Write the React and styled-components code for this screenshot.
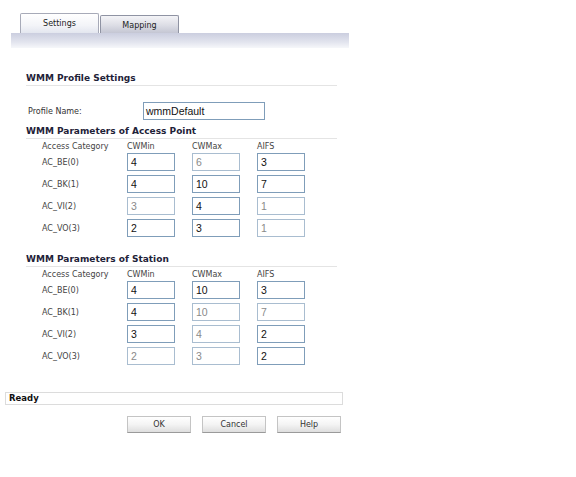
import React from 'react';
import styled, { createGlobalStyle } from 'styled-components';

const GlobalStyle = createGlobalStyle`
  body {
    margin: 0;
    background: #ffffff;
    font-family: 'DejaVu Sans', Verdana, sans-serif;
    color: #222;
  }
`;

const AP_ROWS = [
  { name: 'AC_BE(0)', values: [['4', 1], ['6', 0], ['3', 1]] },
  { name: 'AC_BK(1)', values: [['4', 1], ['10', 1], ['7', 1]] },
  { name: 'AC_VI(2)', values: [['3', 0], ['4', 1], ['1', 0]] },
  { name: 'AC_VO(3)', values: [['2', 1], ['3', 1], ['1', 0]] },
];

const STATION_ROWS = [
  { name: 'AC_BE(0)', values: [['4', 1], ['10', 1], ['3', 1]] },
  { name: 'AC_BK(1)', values: [['4', 1], ['10', 0], ['7', 0]] },
  { name: 'AC_VI(2)', values: [['3', 1], ['4', 0], ['2', 1]] },
  { name: 'AC_VO(3)', values: [['2', 0], ['3', 0], ['2', 1]] },
];

const ParamTable = ({ rows }) => (
  <Table>
    <HeadCell>Access Category</HeadCell>
    <HeadCell>CWMin</HeadCell>
    <HeadCell>CWMax</HeadCell>
    <HeadCell>AIFS</HeadCell>
    {rows.map((row) => (
      <React.Fragment key={row.name}>
        <RowLabel>{row.name}</RowLabel>
        {row.values.map(([v, on], i) => (
          <Field key={i} $on={on}>{v}</Field>
        ))}
      </React.Fragment>
    ))}
  </Table>
);

const App = () => {
  return (
    <Page>
      <GlobalStyle />
      <TabArea>
        <TabRow>
          <Tab $active>Settings</Tab>
          <Tab>Mapping</Tab>
        </TabRow>
        <TabBar />
      </TabArea>

      <Form>
        <Heading>WMM Profile Settings</Heading>
        <ProfileRow>
          <ProfileLabel>Profile Name:</ProfileLabel>
          <ProfileInput>wmmDefault</ProfileInput>
        </ProfileRow>

        <Heading $top={6}>WMM Parameters of Access Point</Heading>
        <ParamTable rows={AP_ROWS} />

        <Heading $top={17}>WMM Parameters of Station</Heading>
        <ParamTable rows={STATION_ROWS} />
      </Form>

      <StatusBar>Ready</StatusBar>

      <Buttons>
        <Button>OK</Button>
        <Button>Cancel</Button>
        <Button>Help</Button>
      </Buttons>
    </Page>
  );
};

const Page = styled.div`
  width: 576px;
  height: 477px;
  overflow: hidden;
`;

const TabArea = styled.div`
  margin: 13px 0 0 11px;
  width: 338px;
`;

const TabRow = styled.div`
  display: flex;
  align-items: flex-end;
  padding-left: 9px;
  gap: 1px;
  height: 20px;
`;

const Tab = styled.div`
  box-sizing: border-box;
  width: 79px;
  height: ${(p) => (p.$active ? '20px' : '18px')};
  display: flex;
  align-items: center;
  justify-content: center;
  font-size: 8px;
  color: #222;
  border: 1px solid ${(p) => (p.$active ? '#a7aab8' : '#8f93a3')};
  border-bottom: none;
  border-radius: 2px 2px 0 0;
  background: ${(p) =>
    p.$active
      ? 'linear-gradient(#ffffff, #f3f4f8 60%, #e3e6ef)'
      : 'linear-gradient(#f4f4f7, #dcdde5 55%, #c4c6d3)'};
  padding-top: ${(p) => (p.$active ? '0' : '1px')};
`;

const TabBar = styled.div`
  height: 15px;
  background: linear-gradient(#cbcedf, #e2e4ee 60%, #f6f7fa);
`;

const Form = styled.div`
  margin: 25px 0 0 26px;
  width: 311px;
`;

const Heading = styled.div`
  margin-top: ${(p) => p.$top || 0}px;
  font-size: 9px;
  font-weight: bold;
  line-height: 10px;
  color: #1e2238;
  padding-bottom: 2px;
  border-bottom: 1px solid #e4e4e4;
`;

const ProfileRow = styled.div`
  display: flex;
  align-items: center;
  margin-top: 16px;
  padding-left: 2px;
`;

const ProfileLabel = styled.div`
  width: 115px;
  font-size: 8px;
  color: #333;
`;

const BaseBox = styled.div`
  box-sizing: border-box;
  height: 18px;
  display: flex;
  align-items: center;
  padding-left: 3px;
  font-family: 'Liberation Sans', Arial, sans-serif;
  font-size: 10.5px;
  background: #fff;
`;

const ProfileInput = styled(BaseBox)`
  width: 122px;
  border: 1px solid #7f9db9;
  color: #111;
  padding-left: 2px;
`;

const Table = styled.div`
  display: grid;
  grid-template-columns: 68px 48px 48px 48px;
  column-gap: 17px;
  row-gap: 4px;
  padding-left: 16px;
  margin-top: 3px;
  align-items: center;
`;

const HeadCell = styled.div`
  font-size: 8px;
  color: #444;
  line-height: 10px;
  margin-bottom: -3px;
`;

const RowLabel = styled.div`
  font-size: 8px;
  color: #444;
`;

const Field = styled(BaseBox)`
  border: 1px solid ${(p) => (p.$on ? '#7f9db9' : '#a9bdd0')};
  color: ${(p) => (p.$on ? '#111' : '#8a8a8a')};
`;

const StatusBar = styled.div`
  box-sizing: border-box;
  margin: 27px 0 0 5px;
  width: 338px;
  height: 13px;
  border: 1px solid #dcdcdc;
  padding-left: 3px;
  font-size: 8.5px;
  font-weight: bold;
  line-height: 11px;
  color: #111;
`;

const Buttons = styled.div`
  display: flex;
  gap: 11px;
  margin: 11px 0 0 127px;
`;

const Button = styled.div`
  box-sizing: border-box;
  width: 64px;
  height: 17px;
  display: flex;
  align-items: center;
  justify-content: center;
  font-size: 8px;
  color: #333;
  border: 1px solid #c4c4c4;
  border-bottom-color: #9a9a9a;
  background: linear-gradient(#ffffff, #f4f4f4 50%, #dedede);
`;

export default App;
